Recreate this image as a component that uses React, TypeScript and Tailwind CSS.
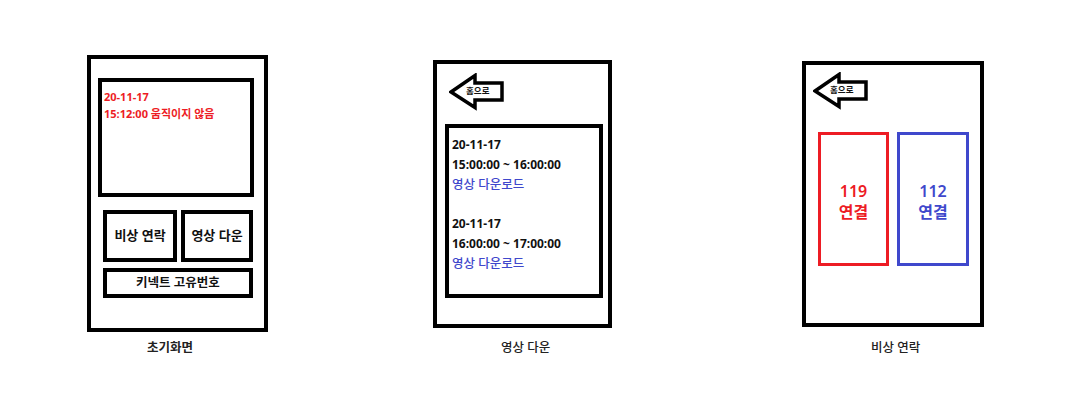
import React from 'react';

const FONT = "font-['Noto_Sans','Noto_Sans_CJK_KR',sans-serif]";

// back arrow with the small "홈으로" caption sitting on top of it
function BackArrow() {
    return (
        <div className="relative w-[56px] h-[38px]">
            <svg width="56" height="38" viewBox="0 0 56 38" className="block">
                <polygon
                    points="2,19 26,2.5 26,10 53,10 53,27 26,27 26,34.5"
                    fill="white"
                    stroke="black"
                    strokeWidth="3.5"
                    strokeLinejoin="miter"
                />
            </svg>
            <span className="absolute left-[17px] top-[12px] text-[8.5px] leading-[12px] font-bold text-[#111]">홈으로</span>
        </div>
    );
}

function Frame({ className, children }: { className: string, children?: React.ReactNode }) {
    return <div className={`border-[4px] border-black bg-white ${className}`}>{children}</div>;
}

// 초기화면
function HomeScreen() {
    return (
        <Frame className="w-[181px] h-[277px] flex flex-col">
            <div className="ml-[7px] mt-[19px] w-[156px] h-[119px] border-[4px] border-black px-[2px] pt-[6px]">
                <p className="text-[11px] leading-[17px] font-bold text-[#ed1c24]">20-11-17</p>
                <p className="text-[11px] leading-[17px] font-bold text-[#ed1c24]">15:12:00 움직이지 않음</p>
            </div>
            <div className="ml-[12px] mt-[13px] flex gap-[4px]">
                <div className="w-[74px] h-[52px] border-[4px] border-black flex items-center justify-center text-[13px] font-semibold text-[#111]">비상 연락</div>
                <div className="w-[72px] h-[52px] border-[4px] border-black flex items-center justify-center text-[13px] font-semibold text-[#111]">영상 다운</div>
            </div>
            <div className="ml-[12px] mt-[6px] w-[150px] h-[30px] border-[4px] border-black flex items-center justify-center text-[12.5px] font-bold text-[#111]">
                키넥트 고유번호
            </div>
        </Frame>
    );
}

const RECORDS = [
    { date: "20-11-17", range: "15:00:00 ~ 16:00:00" },
    { date: "20-11-17", range: "16:00:00 ~ 17:00:00" },
];

// 영상 다운
function VideoScreen() {
    return (
        <Frame className="w-[179px] h-[268px] flex flex-col">
            <div className="ml-[12px] mt-[9px]"><BackArrow /></div>
            <div className="ml-[8px] mt-[13px] w-[158px] h-[174px] border-[4px] border-black pl-[3px] pt-[7px] flex flex-col gap-[20px]">
                {RECORDS.map((r, i) => (
                    <div key={i}>
                        <p className="text-[12px] leading-[20px] font-bold text-[#111]">{r.date}</p>
                        <p className="text-[12px] leading-[20px] font-bold text-[#111]">{r.range}</p>
                        <p className="text-[12.5px] leading-[19px] font-medium text-[#3f48cc]">영상 다운로드</p>
                    </div>
                ))}
            </div>
        </Frame>
    );
}

// 비상 연락
function EmergencyScreen() {
    return (
        <Frame className="w-[182px] h-[266px] flex flex-col">
            <div className="ml-[7px] mt-[7px]"><BackArrow /></div>
            <div className="ml-[12px] mt-[22px] flex gap-[8px]">
                <div className="w-[71px] h-[134px] border-[3px] border-[#ed1c24] pt-[6px] flex flex-col items-center justify-center text-[#ed1c24] text-[16px] leading-[21px] font-semibold">
                    <span>119</span>
                    <span>연결</span>
                </div>
                <div className="w-[72px] h-[134px] border-[3px] border-[#3f48cc] pt-[6px] flex flex-col items-center justify-center text-[#3f48cc] text-[16px] leading-[21px] font-semibold">
                    <span>112</span>
                    <span>연결</span>
                </div>
            </div>
        </Frame>
    );
}

export default function App() {
    return (
        <div className={`w-[1084px] h-[403px] bg-white flex items-start pl-[87px] ${FONT}`}>
            <div className="mt-[55px] flex flex-col">
                <HomeScreen />
                <p className="ml-[60px] mt-[8px] text-[12.5px] leading-[16px] font-bold text-[#222]">초기화면</p>
            </div>
            <div className="ml-[165px] mt-[60px] flex flex-col">
                <VideoScreen />
                <p className="ml-[68px] mt-[12px] text-[12.5px] leading-[16px] font-medium text-[#222]">영상 다운</p>
            </div>
            <div className="ml-[190px] mt-[61px] flex flex-col">
                <EmergencyScreen />
                <p className="ml-[69px] mt-[13px] text-[12.5px] leading-[16px] font-medium text-[#222]">비상 연락</p>
            </div>
        </div>
    );
}
